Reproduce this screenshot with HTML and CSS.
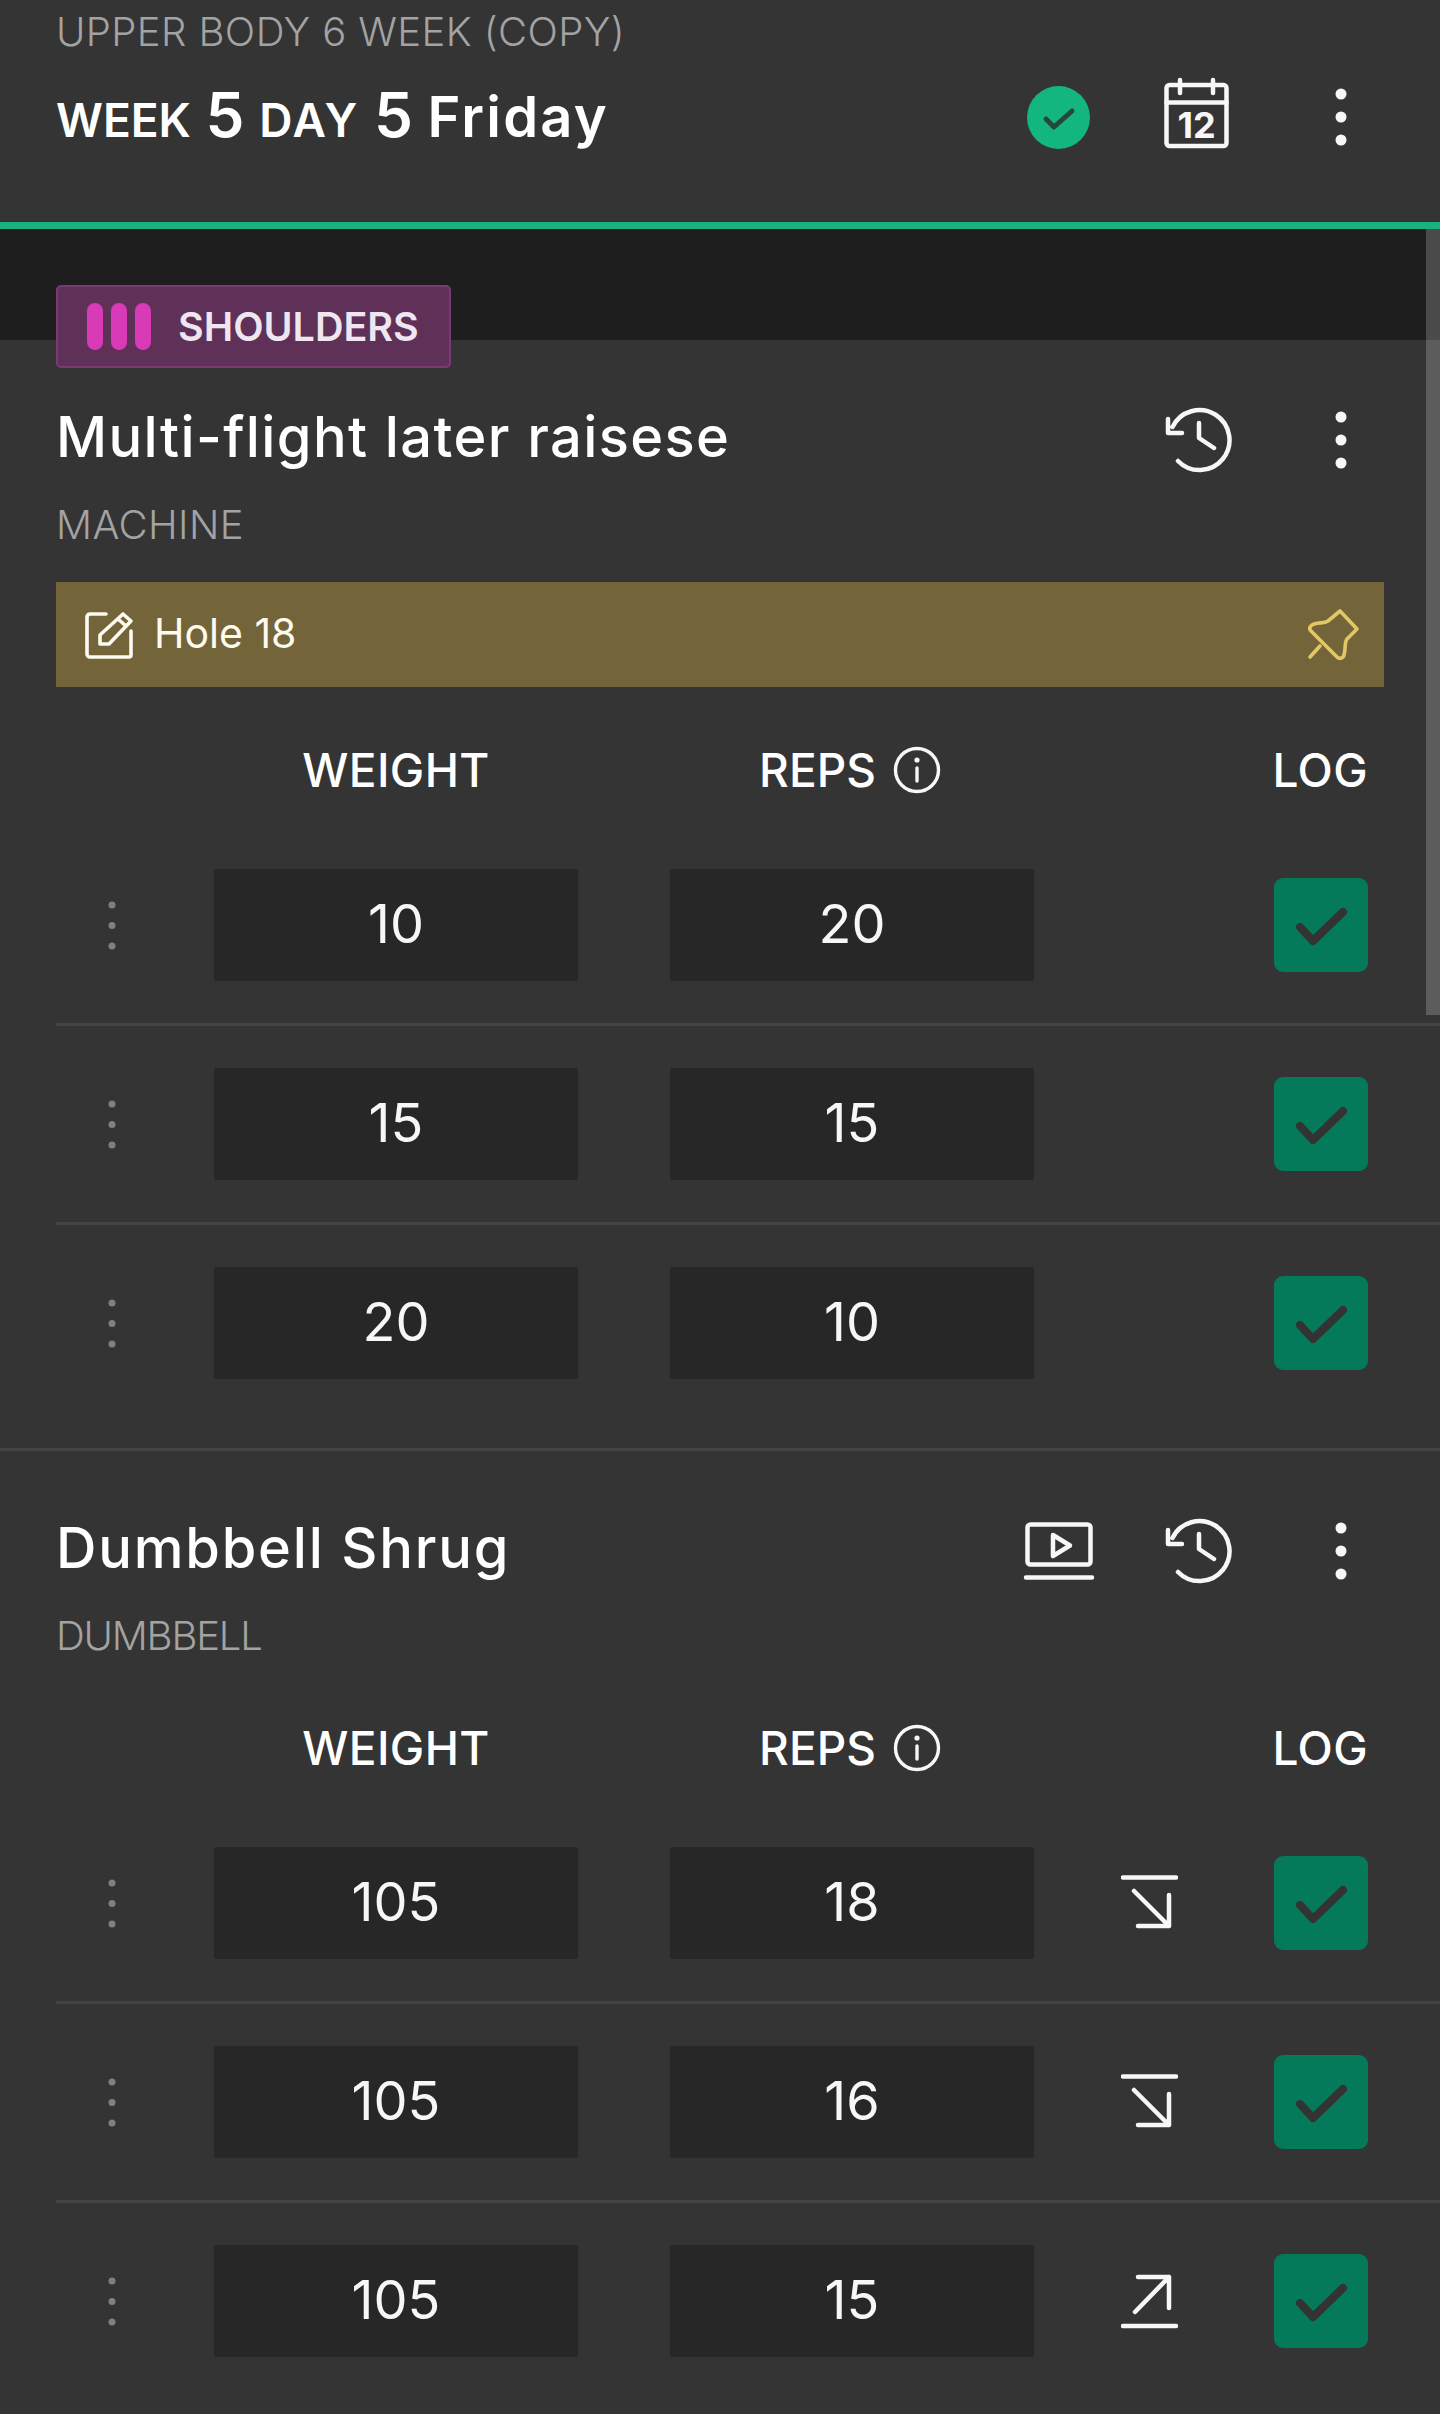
FILE: index.html
```html
<!DOCTYPE html>
<html lang="en">
<head>
	<meta charset="UTF-8">
	<title>Workout</title>
	<link rel="stylesheet" href="styles.css">
</head>
<body>
	<svg class="sprite" width="0" height="0">
		<symbol id="i-history" viewBox="0 0 68 68">
			<path d="M7.5 21A30 30 0 1 1 13 55M3 13V27H17M34 17V32L49 42"/>
		</symbol>
		<symbol id="i-more" viewBox="0 0 12 58">
			<circle class="fill" cx="6" cy="6" r="5.5"/>
			<circle class="fill" cx="6" cy="29" r="5.5"/>
			<circle class="fill" cx="6" cy="52" r="5.5"/>
		</symbol>
		<symbol id="i-info" viewBox="0 0 48 48">
			<circle cx="24" cy="24" r="21.5"/>
			<path d="M24 22V35"/>
			<circle class="fill" cx="24" cy="14" r="2.6"/>
		</symbol>
		<symbol id="i-grip" viewBox="0 0 8 49">
			<circle class="dim" cx="4" cy="4" r="3.5"/>
			<circle class="dim" cx="4" cy="24.5" r="3.5"/>
			<circle class="dim" cx="4" cy="45" r="3.5"/>
		</symbol>
		<symbol id="i-down" viewBox="0 0 57 56">
			<path d="M2 2.5H55M13 16L48 51M48 20V51H17"/>
		</symbol>
		<symbol id="i-up" viewBox="0 0 57 56">
			<path d="M2 53H55M14 39L48 4M17 4H48V35"/>
		</symbol>
	</svg>

	<div class="scrollbar"></div>

	<header class="top">
		<div>
			<div class="plan">UPPER BODY 6 WEEK (COPY)</div>
			<div class="day">WEEK <b>5</b> <em>DAY</em> <b>5</b> <span>Friday</span></div>
		</div>
		<div class="top-icons">
			<svg class="done" viewBox="0 0 63 63">
				<circle cx="31.5" cy="31.5" r="31.5"/>
				<path d="M19 33L27 41L45 25"/>
			</svg>
			<svg class="calendar" viewBox="0 0 65 71">
				<rect x="2.5" y="7" width="60" height="61" rx="3"/>
				<path d="M2.5 24.5H62.5M16 2V15M49 2V15"/>
				<text x="32.5" y="60" text-anchor="middle">12</text>
			</svg>
			<svg class="more"><use href="#i-more"/></svg>
		</div>
	</header>

	<div class="band"></div>

	<section class="exercise first">
		<div class="tag"><span class="bars"><i></i><i></i><i></i></span>SHOULDERS</div>
		<div class="ex-head">
			<h2>Multi-flight later raisese</h2>
			<svg class="history"><use href="#i-history"/></svg>
			<svg class="more"><use href="#i-more"/></svg>
		</div>
		<div class="kind machine">MACHINE</div>
		<div class="note">
			<svg class="edit" viewBox="0 0 48 48">
				<path d="M21 3H5A3 3 0 0 0 2 6V43A3 3 0 0 0 5 46H44A2 2 0 0 0 46 44V20"/>
				<path d="M15 33V24L38 3L46 10L24 33ZM33 8L41 15"/>
			</svg>
			<span>Hole 18</span>
			<svg class="pin" viewBox="0 0 51 52">
				<path d="M32 2L49 20L39 30C36 34 38 40 36 46C35 50 31 50 29 48L3 22C0 19 3 16 6 15C12 13 16 15 20 12ZM12 37L2 48"/>
			</svg>
		</div>
		<div class="cols">
			<div class="col-w">WEIGHT</div>
			<div class="col-r">REPS <svg class="info"><use href="#i-info"/></svg></div>
			<div class="col-l">LOG</div>
		</div>
		<div class="set">
			<svg class="grip"><use href="#i-grip"/></svg>
			<div class="num">10</div>
			<div class="num second">20</div>
			<div class="log"><svg viewBox="0 0 94 94"><path d="M26 49L39 63L69 34"/></svg></div>
		</div>
		<div class="set">
			<svg class="grip"><use href="#i-grip"/></svg>
			<div class="num">15</div>
			<div class="num second">15</div>
			<div class="log"><svg viewBox="0 0 94 94"><path d="M26 49L39 63L69 34"/></svg></div>
		</div>
		<div class="set">
			<svg class="grip"><use href="#i-grip"/></svg>
			<div class="num">20</div>
			<div class="num second">10</div>
			<div class="log"><svg viewBox="0 0 94 94"><path d="M26 49L39 63L69 34"/></svg></div>
		</div>
	</section>

	<section class="exercise">
		<div class="ex-head">
			<h2 class="wide">Dumbbell Shrug</h2>
			<svg class="video" viewBox="0 0 68 58">
				<rect x="2.5" y="2.5" width="63" height="40" rx="3"/>
				<path d="M1 55.5H67M28 13L45 23.5L28 34Z"/>
			</svg>
			<svg class="history"><use href="#i-history"/></svg>
			<svg class="more"><use href="#i-more"/></svg>
		</div>
		<div class="kind dumbbell">DUMBBELL</div>
		<div class="cols cols-b">
			<div class="col-w">WEIGHT</div>
			<div class="col-r">REPS <svg class="info"><use href="#i-info"/></svg></div>
			<div class="col-l">LOG</div>
		</div>
		<div class="set">
			<svg class="grip"><use href="#i-grip"/></svg>
			<div class="num">105</div>
			<div class="num second">18</div>
			<svg class="jump"><use href="#i-down"/></svg>
			<div class="log"><svg viewBox="0 0 94 94"><path d="M26 49L39 63L69 34"/></svg></div>
		</div>
		<div class="set">
			<svg class="grip"><use href="#i-grip"/></svg>
			<div class="num">105</div>
			<div class="num second">16</div>
			<svg class="jump"><use href="#i-down"/></svg>
			<div class="log"><svg viewBox="0 0 94 94"><path d="M26 49L39 63L69 34"/></svg></div>
		</div>
		<div class="set">
			<svg class="grip"><use href="#i-grip"/></svg>
			<div class="num">105</div>
			<div class="num second">15</div>
			<svg class="jump"><use href="#i-up"/></svg>
			<div class="log"><svg viewBox="0 0 94 94"><path d="M26 49L39 63L69 34"/></svg></div>
		</div>
	</section>
</body>
</html>
```

FILE: styles.css
```css
body{
	margin: 0;
	height: 2414px;
	overflow: hidden;
	position: relative;
	background: #343434;
	color: #fff;
	font-family: "Inter", "Liberation Sans", sans-serif;
}
svg{
	fill: none;
	stroke: #f7f7f7;
	stroke-width: 4.5;
	stroke-linecap: round;
	stroke-linejoin: round;
	flex: none;
	overflow: visible;
}
.sprite{
	position: absolute;
}
.fill{
	fill: #f7f7f7;
	stroke: none;
}
.dim{
	fill: #808080;
	stroke: none;
}
.scrollbar{
	position: absolute;
	right: 0;
	top: 229px;
	width: 14px;
	height: 786px;
	background: rgba(255,255,255,0.2);
}

/* header */
.top{
	height: 222px;
	box-sizing: border-box;
	padding: 8px 93px 0 56px;
	display: flex;
	justify-content: space-between;
}
.plan{
	font-size: 40px;
	line-height: 48px;
	font-weight: 300;
	letter-spacing: 0.4px;
	color: #a3a3a3;
}
.day{
	margin-top: 27px;
	font-size: 46px;
	line-height: 64px;
	font-weight: 600;
	word-spacing: 3px;
}
.day b{
	font-size: 62px;
	font-weight: 600;
}
.day em{
	font-style: normal;
	letter-spacing: 2px;
}
.day span{
	font-size: 56px;
	letter-spacing: 2.2px;
}
.top-icons{
	display: flex;
	align-items: center;
	height: 142px;
	margin-top: 38px;
}
.done{
	width: 63px;
	height: 63px;
	margin-right: 74px;
}
.done circle{
	fill: #14b67f;
	stroke: none;
}
.done path{
	stroke: #24493c;
	stroke-width: 5;
}
.calendar{
	width: 65px;
	height: 71px;
	margin: 0 106px 8px 0;
}
.calendar text{
	fill: #f7f7f7;
	stroke: none;
	font-size: 36px;
	font-weight: 700;
}
.more{
	width: 12px;
	height: 58px;
}
.band{
	height: 111px;
	border-top: 7px solid #1ab27e;
	background: #1e1e1e;
}

/* exercise */
.exercise{
	padding-left: 56px;
	padding-top: 60px;
	padding-bottom: 27px;
	border-bottom: 3px solid #444;
}
.exercise.first{
	padding-top: 0;
}
.tag{
	width: 395px;
	height: 83px;
	box-sizing: border-box;
	margin: -55px 0 32px;
	border: 2px solid #7b3a74;
	border-radius: 5px;
	background: #5f3158;
	display: flex;
	align-items: center;
	padding-left: 29px;
	font-size: 39.5px;
	font-weight: 600;
	color: #efe6f0;
	position: relative;
}
.bars{
	display: flex;
	gap: 8px;
	margin-right: 27px;
}
.bars i{
	width: 16px;
	height: 47px;
	border-radius: 8px;
	background: #d93ab7;
}
.ex-head{
	height: 80px;
	display: flex;
	align-items: center;
	padding-right: 93px;
}
.ex-head h2{
	margin: 0 auto 6px 0;
	font-size: 56px;
	font-weight: 500;
	letter-spacing: 1.4px;
}
.ex-head h2.wide{
	letter-spacing: 1.8px;
}
.video{
	width: 68px;
	height: 58px;
	margin-right: 72px;
}
.history{
	width: 68px;
	height: 68px;
	margin-right: 102px;
}
.kind{
	margin-top: 20px;
	height: 50px;
	line-height: 50px;
	font-size: 40px;
	font-weight: 300;
	color: #a3a3a3;
}
.machine{
	letter-spacing: 0.4px;
}
.dumbbell{
	letter-spacing: -1.2px;
}
.note{
	margin: 32px 56px 0 0;
	height: 105px;
	background: #736539;
	display: flex;
	align-items: center;
	padding: 0 25px 0 29px;
	font-size: 41px;
	color: #fdfaf0;
}
.note span{
	margin-bottom: 4px;
}
.edit{
	width: 48px;
	height: 48px;
	margin-right: 21px;
	stroke: #fdfaf0;
	stroke-width: 3.6;
}
.pin{
	width: 51px;
	height: 52px;
	margin-left: auto;
	stroke: #e3c766;
	stroke-width: 3.6;
}
.cols{
	margin-top: 58px;
	height: 50px;
	display: flex;
	align-items: center;
	font-size: 46px;
	font-weight: 500;
	letter-spacing: 0.4px;
}
.cols-b{
	margin-top: 62px;
}
.col-w{
	width: 364px;
	margin-left: 158px;
	text-align: center;
}
.col-r{
	width: 364px;
	margin-left: 90px;
	display: flex;
	align-items: center;
	justify-content: center;
	gap: 17px;
	letter-spacing: 0;
}
.col-l{
	margin-left: auto;
	margin-right: 72px;
}
.info{
	width: 48px;
	height: 48px;
	stroke-width: 3.4;
}
.set{
	height: 196px;
	display: flex;
	align-items: center;
	border-bottom: 3px solid #444;
}
.cols + .set{
	margin-top: 32px;
}
.set:last-child{
	border-bottom: 0;
}
.grip{
	width: 8px;
	height: 49px;
	margin: 0 98px 0 52px;
}
.num{
	width: 364px;
	height: 112px;
	box-sizing: border-box;
	padding-bottom: 3px;
	background: #272727;
	border-radius: 2px;
	display: flex;
	align-items: center;
	justify-content: center;
	font-size: 54px;
	font-weight: 400;
	color: #f7f7f7;
}
.num.second{
	margin-left: 92px;
}
.jump{
	width: 57px;
	height: 56px;
	margin-left: 87px;
}
.log{
	width: 94px;
	height: 94px;
	margin: 0 72px 0 auto;
	background: #057a5a;
	border-radius: 9px;
}
.log svg{
	display: block;
	width: 94px;
	height: 94px;
	stroke: #333;
	stroke-width: 8;
}
```
